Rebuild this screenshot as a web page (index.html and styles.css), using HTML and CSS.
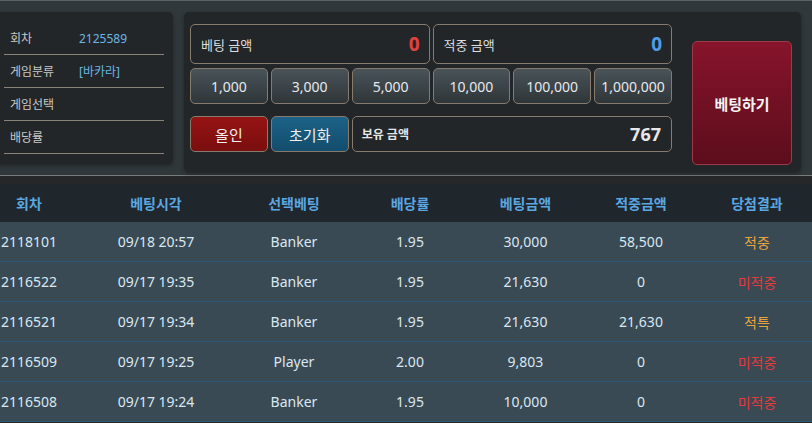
FILE: index.html
```html
<!DOCTYPE html>
<html lang="ko">
<head>
<meta charset="utf-8">
<title>베팅</title>
<link rel="stylesheet" href="styles.css">
</head>
<body>
<div class="top">
  <div class="info">
    <div class="info-row"><span class="info-label">회차</span><span class="info-value">2125589</span></div>
    <div class="info-row"><span class="info-label">게임분류</span><span class="info-value">[바카라]</span></div>
    <div class="info-row"><span class="info-label">게임선택</span><span class="info-value"></span></div>
    <div class="info-row"><span class="info-label">배당률</span><span class="info-value"></span></div>
  </div>
  <div class="bet">
    <div class="bet-grid">
      <div class="row row-amount">
        <div class="box"><span class="box-label">베팅 금액</span><span class="box-value red">0</span></div>
        <div class="box"><span class="box-label">적중 금액</span><span class="box-value blue">0</span></div>
      </div>
      <div class="row row-chips">
        <button class="chip">1,000</button>
        <button class="chip">3,000</button>
        <button class="chip">5,000</button>
        <button class="chip">10,000</button>
        <button class="chip">100,000</button>
        <button class="chip">1,000,000</button>
      </div>
      <div class="row row-actions">
        <button class="act act-allin">올인</button>
        <button class="act act-reset">초기화</button>
        <div class="box box-hold"><span class="hold-label">보유 금액</span><span class="hold-value">767</span></div>
      </div>
    </div>
    <button class="submit">베팅하기</button>
  </div>
</div>
<table class="history">
  <colgroup>
    <col class="c1"><col class="c2"><col class="c3"><col class="c4"><col class="c5"><col class="c6"><col class="c7">
  </colgroup>
  <thead>
    <tr><th>회차</th><th>베팅시각</th><th>선택베팅</th><th>배당률</th><th>베팅금액</th><th>적중금액</th><th>당첨결과</th></tr>
  </thead>
  <tbody>
    <tr><td>2118101</td><td>09/18 20:57</td><td>Banker</td><td>1.95</td><td>30,000</td><td>58,500</td><td class="win">적중</td></tr>
    <tr><td>2116522</td><td>09/17 19:35</td><td>Banker</td><td>1.95</td><td>21,630</td><td>0</td><td class="lose">미적중</td></tr>
    <tr><td>2116521</td><td>09/17 19:34</td><td>Banker</td><td>1.95</td><td>21,630</td><td>21,630</td><td class="win">적특</td></tr>
    <tr><td>2116509</td><td>09/17 19:25</td><td>Player</td><td>2.00</td><td>9,803</td><td>0</td><td class="lose">미적중</td></tr>
    <tr><td>2116508</td><td>09/17 19:24</td><td>Banker</td><td>1.95</td><td>10,000</td><td>0</td><td class="lose">미적중</td></tr>
  </tbody>
</table>
</body>
</html>
```
FILE: styles.css
```css
html, body {
  margin: 0;
  padding: 0;
  overflow: hidden;
}
body {
  background: #262728;
  font-family: "Noto Sans", "Noto Sans CJK KR", sans-serif;
  color: #dde6ee;
}
button {
  font-family: inherit;
  cursor: pointer;
}
.top {
  height: 174px;
  background: #31383b;
  border-top: 1px solid #5d6264;
  border-bottom: 1px solid #7a7b7b;
  display: flex;
  align-items: flex-start;
  padding-top: 11px;
  box-sizing: border-box;
  height: 176px;
  gap: 11px;
}
.info {
  margin-left: -5px;
  width: 178px;
  height: 152px;
  box-sizing: border-box;
  padding: 10px 9px 0 9px;
  background: #222628;
  border-radius: 5px;
  box-shadow: 0 2px 4px rgba(0, 0, 0, 0.35);
}
.info-row {
  height: 33px;
  box-sizing: border-box;
  border-bottom: 1px solid #8a8477;
  display: flex;
  align-items: center;
  padding-left: 6px;
  font-size: 12px;
}
.info-label {
  width: 69px;
  color: #c9c9c9;
}
.info-value {
  color: #6cb6e6;
}
.bet {
  width: 617px;
  height: 160px;
  box-sizing: border-box;
  padding: 12px 9px 0 6px;
  background: #222628;
  border-radius: 5px;
  box-shadow: 0 2px 4px rgba(0, 0, 0, 0.35);
  display: flex;
  align-items: flex-start;
  justify-content: space-between;
}
.bet-grid {
  width: 482px;
  display: flex;
  flex-direction: column;
}
.row {
  display: grid;
  grid-template-columns: repeat(6, 1fr);
  column-gap: 3px;
}
.row-amount {
  height: 40px;
}
.row-chips {
  height: 36px;
  margin-top: 4px;
}
.row-actions {
  height: 36px;
  margin-top: 12px;
}
.box {
  grid-column: span 3;
  border: 1px solid #877b6d;
  border-radius: 5px;
  background: #232628;
  display: flex;
  align-items: center;
  justify-content: space-between;
  padding: 0 9px 0 10px;
}
.box-label {
  font-size: 13px;
  color: #dedede;
}
.box-value {
  font-size: 19px;
  font-weight: 700;
}
.red { color: #e3413f; }
.blue { color: #4d9ee6; }
.chip {
  border: 1px solid #877b6d;
  border-radius: 5px;
  background: linear-gradient(#495358, #2f363a);
  color: #e6e8ea;
  font-size: 14px;
  padding: 0;
}
.act {
  border: 1px solid #877b6d;
  border-radius: 5px;
  color: #f0f0f0;
  font-size: 15px;
  padding: 0;
}
.act-allin {
  background: linear-gradient(#961414, #7a0e0e);
}
.act-reset {
  background: linear-gradient(#1c6288, #134d6c);
}
.box-hold {
  grid-column: span 4;
  padding: 0 10px 0 9px;
}
.hold-label {
  font-size: 12px;
  font-weight: 700;
  color: #e6e6e6;
}
.hold-value {
  font-size: 18px;
  font-weight: 700;
  color: #e8e8e8;
}
.submit {
  margin-top: 17px;
  width: 100px;
  height: 124px;
  border: 1px solid #9b3a4a;
  border-radius: 5px;
  background: linear-gradient(#87142b, #5c0d1c);
  color: #f4f4f4;
  font-size: 15px;
  font-weight: 700;
  padding: 0;
}
.history {
  margin-top: 8px;
  margin-left: -18px;
  width: 833px;
  table-layout: fixed;
  border-collapse: collapse;
  font-size: 14px;
}
.c1 { width: 94px; }
.c2 { width: 160px; }
.c3 { width: 116px; }
.c4 { width: 116px; }
.c5 { width: 115px; }
.c6 { width: 116px; }
.c7 { width: 116px; }
.history th {
  height: 38px;
  padding: 0;
  background: #1f262c;
  color: #5ba7e1;
  font-weight: 700;
  font-size: 14px;
  text-align: center;
}
.history td {
  height: 39px;
  padding: 0;
  background: #394a55;
  border-bottom: 1px solid #2c5877;
  text-align: center;
  color: #dae7f1;
}
.history td.win { color: #eba43a; }
.history td.lose { color: #e23c3c; }
```
